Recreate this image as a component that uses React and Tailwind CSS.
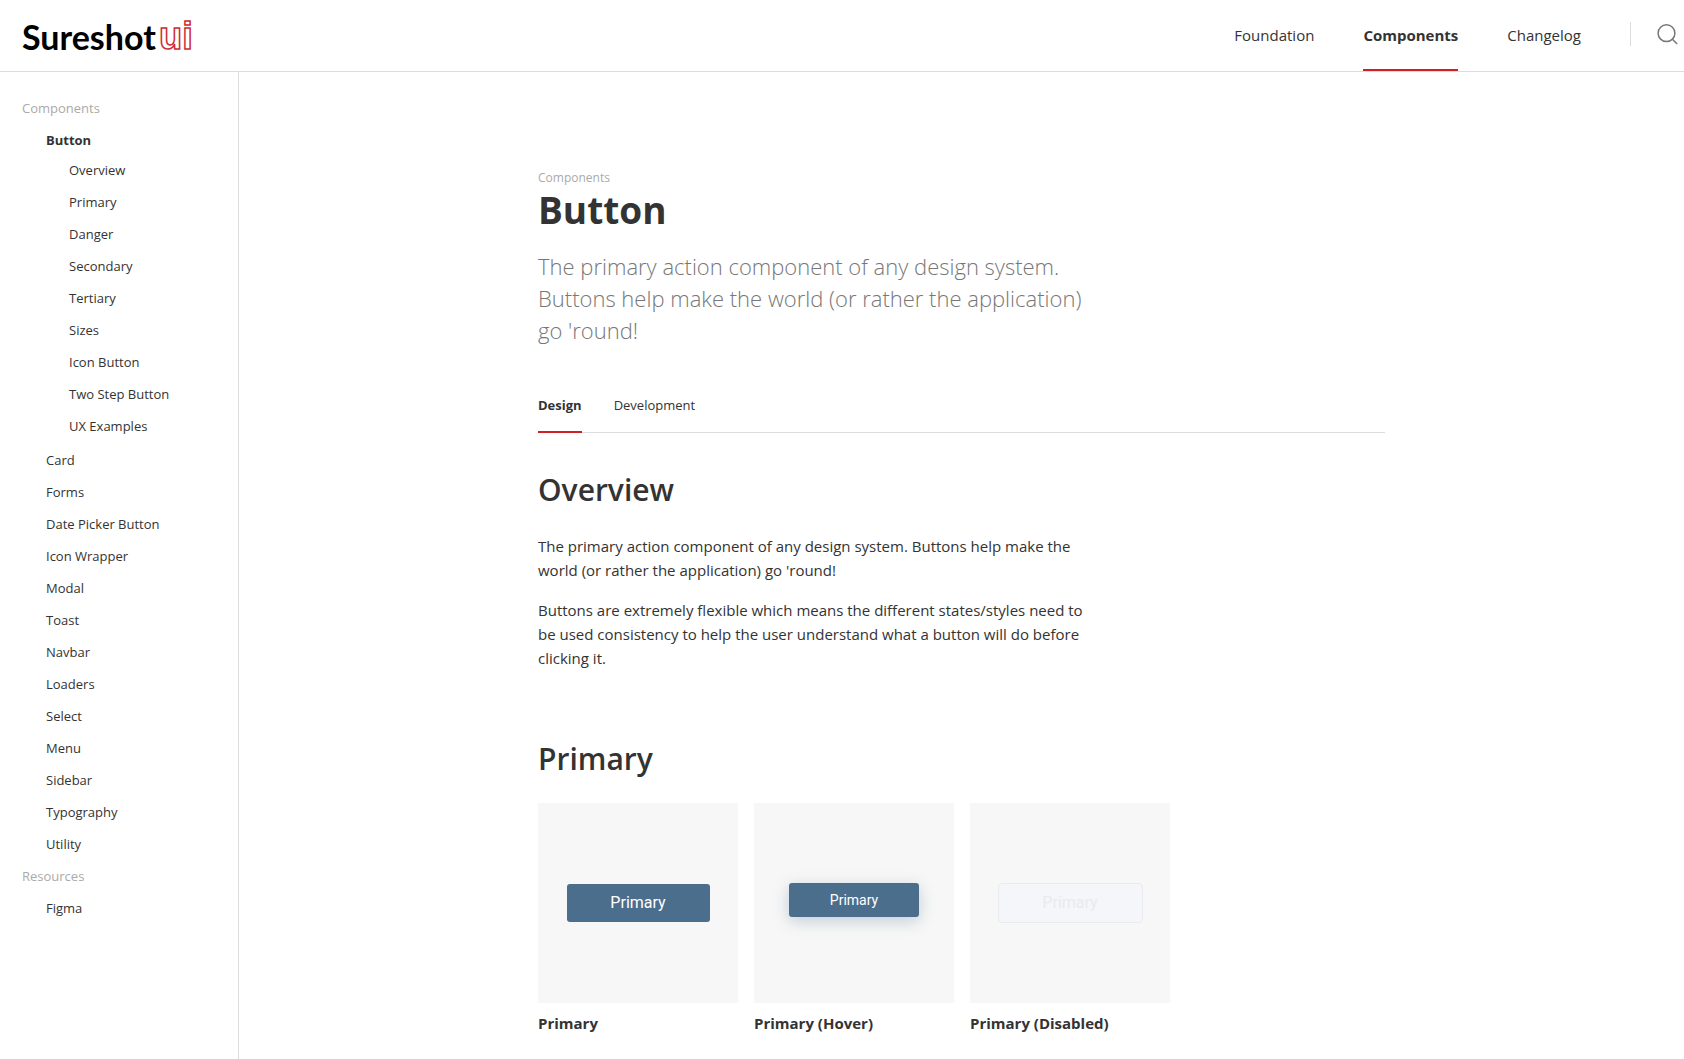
import React from "react";

const topNav = [
  { label: "Foundation" },
  { label: "Components", active: true },
  { label: "Changelog" },
];

const buttonSections = [
  "Overview",
  "Primary",
  "Danger",
  "Secondary",
  "Tertiary",
  "Sizes",
  "Icon Button",
  "Two Step Button",
  "UX Examples",
];

const components = [
  "Card",
  "Forms",
  "Date Picker Button",
  "Icon Wrapper",
  "Modal",
  "Toast",
  "Navbar",
  "Loaders",
  "Select",
  "Menu",
  "Sidebar",
  "Typography",
  "Utility",
];

function Logo() {
  return (
    <a href="#" aria-label="Sureshot ui">
      <svg width="190" height="48" viewBox="0 0 190 48">
        <text x="0" y="38" fontFamily="Lato, sans-serif" fontSize="34" fontWeight="700" fill="#000">
          Sureshot
        </text>
        <text
          x="137"
          y="37"
          fontFamily="'Liberation Sans', sans-serif"
          fontSize="38"
          fontWeight="700"
          fill="#fff"
          stroke="#cf2a33"
          strokeWidth="1.5"
        >
          ui
        </text>
      </svg>
    </a>
  );
}

function Header() {
  return (
    <header className="flex h-18 items-stretch justify-between border-b border-[#dcdcdc] pr-1.5 pl-[22px]">
      <div className="flex items-center">
        <Logo />
      </div>
      <div className="flex items-stretch">
        <nav className="flex gap-[49px] text-[15px]">
          {topNav.map((item) => (
            <a
              key={item.label}
              href="#"
              className={
                item.active
                  ? "flex items-center border-b-2 border-[#cf2026] pt-0.5 font-bold"
                  : "flex items-center border-b-2 border-transparent pt-0.5"
              }
            >
              {item.label}
            </a>
          ))}
        </nav>
        <div className="mt-[22px] ml-[49px] h-6 w-px bg-[#dcdcdc]" />
        <button type="button" aria-label="Search" className="ml-[25px] flex items-center pb-1 text-[#777]">
          <svg width="22" height="22" viewBox="0 0 22 22" fill="none" stroke="currentColor" strokeWidth="1.5">
            <circle cx="10.5" cy="10.2" r="8.4" />
            <path d="M16.4 16.2 21.2 21" />
          </svg>
        </button>
      </div>
    </header>
  );
}

function SideLink({ children }) {
  return (
    <li>
      <a href="#" className="flex h-8 items-center">
        {children}
      </a>
    </li>
  );
}

function Sidebar() {
  return (
    <aside className="w-[239px] shrink-0 border-r border-[#dcdcdc] pt-[21px] pl-[22px] text-[13px]">
      <h2 className="flex h-8 items-center text-[#aaa]">Components</h2>
      <ul className="pl-6">
        <li>
          <a href="#" className="flex h-[30px] items-center pt-0.5 font-bold">
            Button
          </a>
          <ul className="mb-0.5 pl-[23px]">
            {buttonSections.map((s) => (
              <SideLink key={s}>{s}</SideLink>
            ))}
          </ul>
        </li>
        {components.map((c) => (
          <SideLink key={c}>{c}</SideLink>
        ))}
      </ul>
      <h2 className="flex h-8 items-center text-[#aaa]">Resources</h2>
      <ul className="pl-6">
        <SideLink>Figma</SideLink>
      </ul>
    </aside>
  );
}

function Example({ label, children, raised }) {
  return (
    <figure className="w-[200px]">
      <div
        className={
          raised
            ? "flex h-[200px] items-center justify-center bg-[#f7f7f7] pb-[7px]"
            : "flex h-[200px] items-center justify-center bg-[#f7f7f7]"
        }
      >
        {children}
      </div>
      <figcaption className="mt-2 text-[15px] leading-6 font-bold">{label}</figcaption>
    </figure>
  );
}

function Main() {
  return (
    <main className="min-w-0 flex-1 pt-24">
      <div className="mx-auto max-w-[847px]">
        <p className="text-xs leading-5 text-[#aaa]">Components</p>
        <h1 className="text-[37px] leading-11 font-bold">Button</h1>
        <p className="mt-[18px] max-w-[560px] text-[22px] leading-8 font-light text-[#777]">
          The primary action component of any design system. Buttons help make the world (or rather the application) go
          'round!
        </p>

        <div role="tablist" className="mt-12 flex gap-8 border-b border-[#dcdcdc] text-[13px]">
          <button
            type="button"
            role="tab"
            aria-selected="true"
            className="-mb-px h-[39px] border-b-2 border-[#cf2026] pb-3.5 font-bold"
          >
            Design
          </button>
          <button type="button" role="tab" aria-selected="false" className="-mb-px h-[39px] border-b-2 border-transparent pb-3.5">
            Development
          </button>
        </div>

        <section className="mt-[33px]">
          <h2 className="text-[30px] leading-12 font-semibold">Overview</h2>
          <div className="mt-5 flex max-w-[560px] flex-col gap-4 text-[15px] leading-6">
            <p>
              The primary action component of any design system. Buttons help make the world (or rather the application)
              go 'round!
            </p>
            <p>
              Buttons are extremely flexible which means the different states/styles need to be used consistency to help
              the user understand what a button will do before clicking it.
            </p>
          </div>
        </section>

        <section className="mt-[65px]">
          <h2 className="text-[30px] leading-12 font-semibold">Primary</h2>
          <div className="mt-5 flex flex-wrap gap-4">
            <Example label="Primary">
              <button
                type="button"
                className="h-[38px] w-[143px] rounded-[3px] bg-[#4a6e8c] font-['Roboto',sans-serif] text-base text-white"
              >
                Primary
              </button>
            </Example>
            <Example label="Primary (Hover)" raised>
              <button
                type="button"
                className="h-[34px] w-[130px] rounded-[3px] bg-[#4a6e8c] font-['Roboto',sans-serif] text-sm text-white shadow-[0_4px_16px_rgba(74,110,140,0.3)]"
              >
                Primary
              </button>
            </Example>
            <Example label="Primary (Disabled)">
              <button
                type="button"
                disabled
                className="h-10 w-[145px] rounded border border-[#e8eaf0] bg-[#f5f6fa] font-['Roboto',sans-serif] text-base text-[#e8eaf0]"
              >
                Primary
              </button>
            </Example>
          </div>
        </section>
      </div>
    </main>
  );
}

export default function App() {
  return (
    <div className="flex min-h-screen flex-col bg-white font-['Open_Sans',sans-serif] text-[#333]">
      <Header />
      <div className="flex flex-1">
        <Sidebar />
        <Main />
      </div>
    </div>
  );
}
